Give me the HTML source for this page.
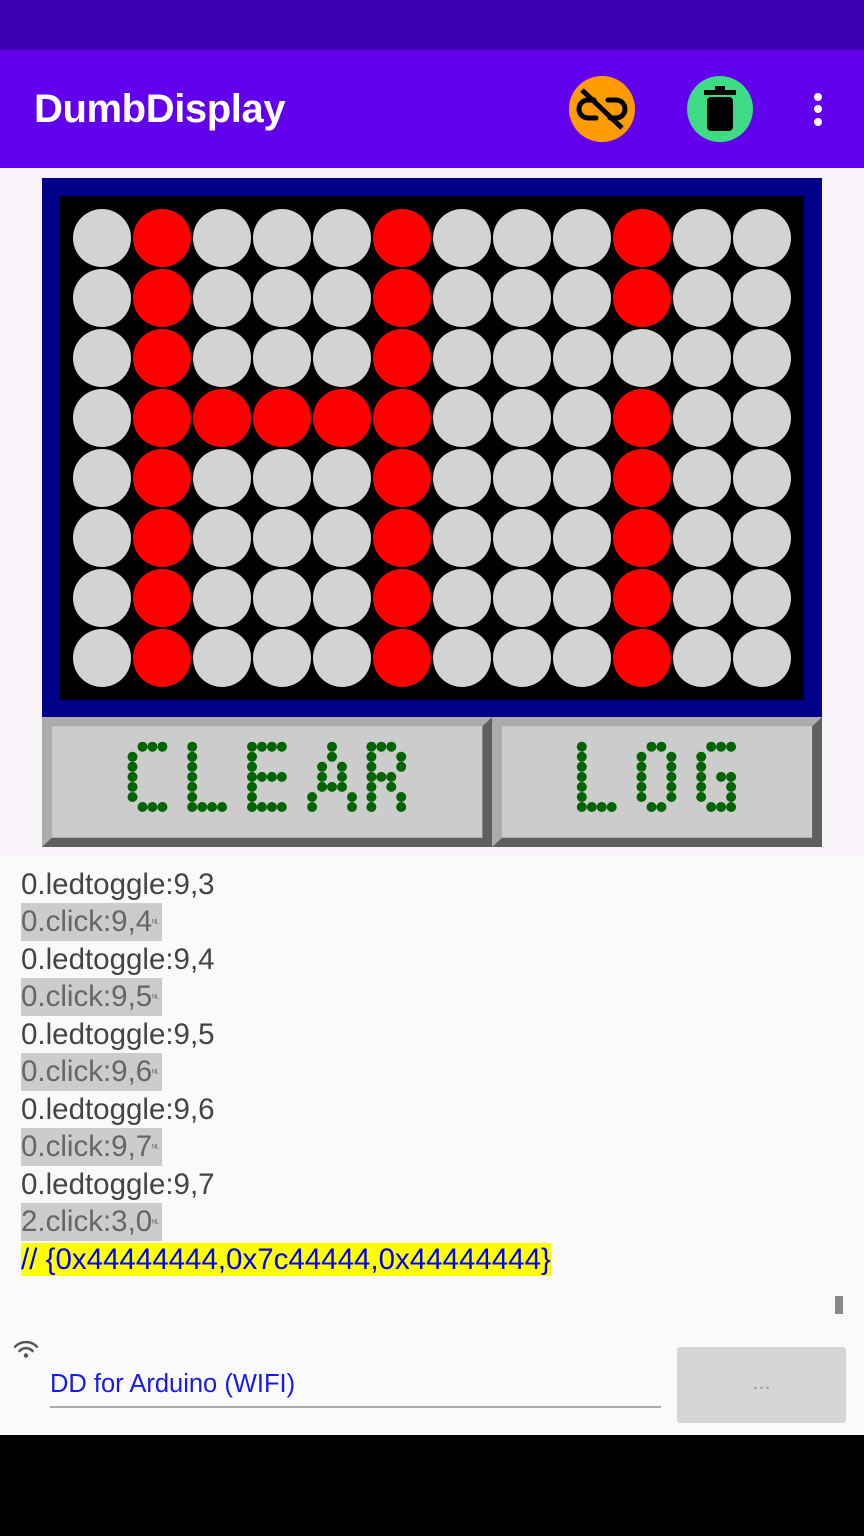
<!DOCTYPE html>
<html><head><meta charset="utf-8"><style>
*{margin:0;padding:0;box-sizing:border-box}
body{width:864px;height:1536px;position:relative;overflow:hidden;background:#000;font-family:"Liberation Sans",sans-serif}
.abs{position:absolute}
.log div{height:37.5px;white-space:nowrap}
.hl{display:inline-block;height:37.5px;background:#ccc;color:#666;padding-right:3px}
.hl small{font-size:9px;vertical-align:middle}
</style></head><body>
<div class="abs" style="left:0;top:0;width:864px;height:50px;background:#3e00b2"></div>
<div class="abs" style="left:0;top:50px;width:864px;height:118px;background:#6200ee"></div>
<div class="abs" style="left:34px;top:87px;color:#fff;font-size:40px;font-weight:bold;letter-spacing:-0.4px">DumbDisplay</div>
<svg class="abs" style="left:540px;top:60px" width="324" height="100">
<circle cx="62" cy="49" r="33" fill="#fe9b00"/>
<g stroke="#000" stroke-width="5" fill="none" stroke-linecap="round">
<path d="M54 40 h-6 a9 9 0 0 0 0 18 h8"/><path d="M70 58 h6 a9 9 0 0 0 0 -18 h-8"/>
<line x1="42" y1="30" x2="82" y2="68" stroke-linecap="butt"/></g>
<circle cx="180" cy="49" r="33" fill="#3ddc84"/>
<rect x="164" y="30" width="32" height="5" fill="#000"/><rect x="175" y="26" width="10" height="5" fill="#000"/>
<rect x="167" y="37" width="26" height="34" rx="4" fill="#000"/>
<circle cx="278" cy="37" r="4" fill="#fff"/><circle cx="278" cy="49" r="4" fill="#fff"/><circle cx="278" cy="62" r="4" fill="#fff"/>
</svg>
<div class="abs" style="left:0;top:168px;width:864px;height:690px;background:#f7f3f8"></div>
<div class="abs" style="left:42px;top:178px;width:780px;height:540px;background:#00008b"></div>
<div class="abs" style="left:60px;top:196px;width:744px;height:504px;background:#000"></div>
<svg class="abs" style="left:60px;top:196px" width="744" height="504" id="g"></svg>
<div class="abs" style="left:42px;top:717px;width:780px;height:130px">
<svg width="780" height="130" viewBox="0 0 1568 390" preserveAspectRatio="none">
<rect x="0" y="0" width="1568" height="390" fill="#cccccc"/>
<polygon points="0,0 905,0 885,28 20,28 20,362 0,390" fill="#acacac"/>
<polygon points="905,0 885,28 885,362 20,362 0,390 905,390" fill="#5e605e"/>
<polygon points="905,0 1568,0 1548,28 925,28 925,362 905,390" fill="#acacac"/>
<polygon points="1568,0 1548,28 1548,362 925,362 905,390 1568,390" fill="#5e605e"/>
<rect x="20" y="28" width="865" height="334" fill="#cccccc"/>
<rect x="925" y="28" width="623" height="334" fill="#cccccc"/>
</svg></div>
<svg class="abs" style="left:0;top:0" width="864" height="860"><g fill="#006400" id="dots"></g></svg>
<div class="abs" style="left:0;top:857px;width:864px;height:578px;background:#fafafa;overflow:hidden">
<div class="abs" style="left:0;top:15px;width:864px;height:420px;overflow:hidden">
<div class="abs log" style="left:21px;top:-6.5px;font-size:29.5px;line-height:37.5px;color:#444">
<div>0.ledtoggle:9,3</div>
<div><span class="hl">0.click:9,4<small>ᴺᴸ</small></span></div>
<div>0.ledtoggle:9,4</div>
<div><span class="hl">0.click:9,5<small>ᴺᴸ</small></span></div>
<div>0.ledtoggle:9,5</div>
<div><span class="hl">0.click:9,6<small>ᴺᴸ</small></span></div>
<div>0.ledtoggle:9,6</div>
<div><span class="hl">0.click:9,7<small>ᴺᴸ</small></span></div>
<div>0.ledtoggle:9,7</div>
<div><span class="hl">2.click:3,0<small>ᴺᴸ</small></span></div>
<div><span style="display:inline-block;height:33px;line-height:33px;background:#ffff00;color:#00f;margin-top:2px">// {0x44444444,0x7c44444,0x44444444}</span></div>
</div></div>
<div class="abs" style="left:835px;top:439px;width:8px;height:18px;background:#888"></div>
<svg class="abs" style="left:12px;top:482px" width="28" height="22" viewBox="0 0 24 20">
<g fill="none" stroke="#555" stroke-width="2.2" stroke-linecap="round"><path d="M2 7 a14 14 0 0 1 20 0"/><path d="M6 11 a8 8 0 0 1 12 0"/></g><circle cx="12" cy="15" r="2" fill="#555"/></svg>
<div class="abs" style="left:50px;top:513px;font-size:25.5px;color:#1a1ae6">DD for Arduino (WIFI)</div>
<div class="abs" style="left:50px;top:549px;width:611px;height:2px;background:#aaa"></div>
<div class="abs" style="left:677px;top:490px;width:169px;height:76px;background:#d6d6d6;border-radius:3px;color:#999;font-size:22px;text-align:center;line-height:70px">...</div>
</div>
<script>
var red={};[0,1,2,3,4,5,6,7].forEach(function(r){red[r+',1']=1;red[r+',5']=1;if(r!=2)red[r+',9']=1;});[2,3,4].forEach(function(c){red['3,'+c]=1});
var s='';for(var r=0;r<8;r++)for(var c=0;c<12;c++){s+='<circle cx="'+(42+c*60)+'" cy="'+(42+r*60)+'" r="29" fill="'+(red[r+','+c]?'#ff0000':'#d3d3d3')+'"/>';}
document.getElementById('g').innerHTML=s;
var d='';
function dot(x,r){d+='<circle cx="'+(42+x/2.01).toFixed(1)+'" cy="'+(746.7+r*10.05).toFixed(1)+'" r="5"/>';}
[202,222,242].forEach(function(x){dot(x,0);dot(x,6)});[1,2,3,4,5].forEach(function(r){dot(182,r)});
for(var r=0;r<7;r++)dot(302,r);[322,342,362].forEach(function(x){dot(x,6)});
[422,442,462,482].forEach(function(x){dot(x,0)});for(r=1;r<7;r++)dot(422,r);[442,462,482].forEach(function(x){dot(x,3);dot(x,6)});
dot(583,0);dot(583,1);dot(563,2);dot(603,2);dot(563,3);dot(603,3);dot(563,4);dot(583,4);dot(603,4);dot(543,5);dot(623,5);dot(543,6);dot(623,6);
for(r=0;r<7;r++)dot(662,r);dot(682,0);dot(702,0);dot(722,1);dot(722,2);dot(682,3);dot(702,3);dot(702,4);dot(722,5);dot(722,6);
for(r=0;r<7;r++)dot(1085,r);[1105,1125,1145].forEach(function(x){dot(x,6)});
dot(1225,0);dot(1245,0);dot(1225,6);dot(1245,6);for(r=1;r<6;r++){dot(1205,r);dot(1265,r)}
[1345,1365,1385].forEach(function(x){dot(x,0);dot(x,6)});for(r=1;r<6;r++)dot(1325,r);dot(1365,3);dot(1385,3);dot(1385,4);dot(1385,5);
document.getElementById('dots').innerHTML=d;
</script>
</body></html>
